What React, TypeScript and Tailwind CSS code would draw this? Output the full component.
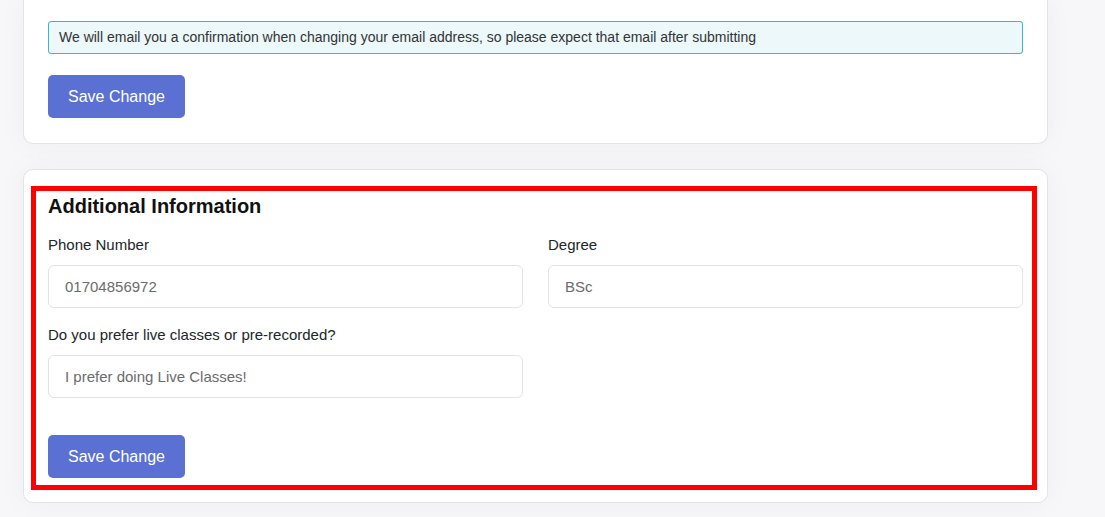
import React from 'react';

const Field: React.FC<{ label: string; value: string }> = ({ label, value }) => (
  <div>
    <label className="block text-[15px] leading-[22px] text-[#212529] mb-[9px]">{label}</label>
    <input
      readOnly
      value={value}
      className="block w-full h-[43px] px-4 rounded-[6px] border border-[#e3e3e3] bg-white text-[15px] text-[#6b6b6b] outline-none"
    />
  </div>
);

const SaveButton: React.FC = () => (
  <button className="h-[43px] px-5 rounded-[5px] bg-[#5a71d3] text-white text-[16px]">
    Save Change
  </button>
);

export default function App() {
  return (
    <div className="min-h-[517px] bg-[#f7f7f9] pl-[23px] pr-[57px] pb-[15px] font-['Liberation_Sans',Arial,sans-serif]">
      {/* Email settings card (top cut off) */}
      <div className="bg-white border border-t-0 border-[#e4e4e6] rounded-b-[10px] shadow-[0_0_30px_rgba(0,0,0,0.04)] px-6 pt-[21px] pb-[25px]">
        <div className="h-[33px] flex items-center px-[10px] rounded-[3px] border border-[#3ab5cc] bg-[#ecf8fa] text-[14px] text-[#333]">
          We will email you a confirmation when changing your email address, so please expect that email after submitting
        </div>
        <div className="mt-[21px]">
          <SaveButton />
        </div>
      </div>

      {/* Additional information card */}
      <div className="mt-[25px] bg-white border border-[#e4e4e6] rounded-[10px] shadow-[0_0_30px_rgba(0,0,0,0.04)] pl-[7px] pr-[10px] pt-[16px] pb-[12px]">
        <div className="border-[5px] border-[#ff0000] pl-[12px] pr-[9px] pt-[3px] pb-[7px]">
          <h2 className="text-[20px] leading-[24px] font-bold text-[#111]">Additional Information</h2>
          <div className="grid grid-cols-2 gap-x-[25px] gap-y-[16px] mt-[16px]">
            <Field label="Phone Number" value="01704856972" />
            <Field label="Degree" value="BSc" />
            <Field label="Do you prefer live classes or pre-recorded?" value="I prefer doing Live Classes!" />
          </div>
          <div className="mt-[37px]">
            <SaveButton />
          </div>
        </div>
      </div>
    </div>
  );
}
